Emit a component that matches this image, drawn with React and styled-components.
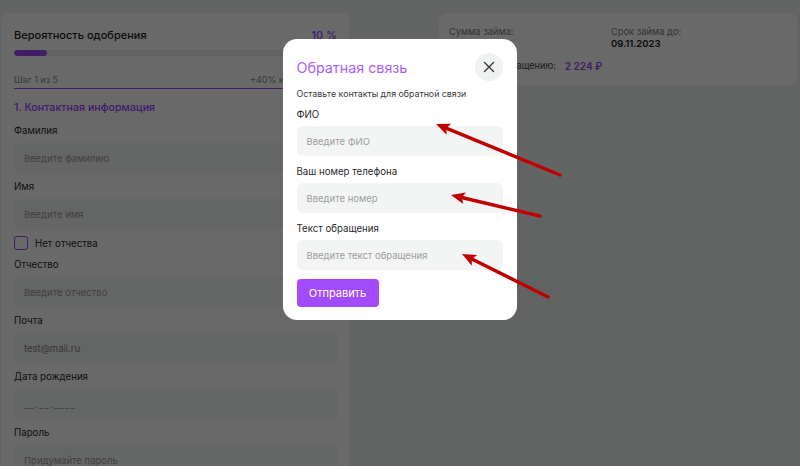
import React from "react";
import styled, { createGlobalStyle } from "styled-components";

const PURPLE = "#9d44fb";

const GlobalStyle = createGlobalStyle`
  html, body { margin: 0; padding: 0; }
  body {
    background: #eef0f0;
    font-family: Inter, "Noto Sans", "Liberation Sans", sans-serif;
    color: #1c1c1c;
    overflow: hidden;
  }
  * { box-sizing: border-box; }
`;

const Page = styled.div`
  display: flex;
  align-items: flex-start;
  padding: 13px 3px 0 1px;
  height: 466px;
  overflow: hidden;
`;

const FormCard = styled.div`
  width: 349px;
  height: 480px;
  background: #fff;
  border-radius: 8px;
  padding: 14px 13px 0 13px;
  display: flex;
  flex-direction: column;
`;

const Row = styled.div`
  display: flex;
  justify-content: space-between;
  align-items: center;
`;

const CardTitle = styled.div`
  font-size: 11px;
  line-height: 16px;
  font-weight: 500;
  color: ${(p) => (p.$accent ? PURPLE : "#1c1c1c")};
`;

const Track = styled.div`
  margin-top: 7px;
  height: 6px;
  border-radius: 3px;
  background: #eceef0;
  overflow: hidden;
`;

const Fill = styled.div`
  height: 100%;
  border-radius: 3px;
  background: ${PURPLE};
`;

const StepRow = styled(Row)`
  margin-top: 17px;
  padding-bottom: 1px;
  border-bottom: 1.5px solid ${PURPLE};
`;

const StepText = styled.span`
  font-size: 9px;
  line-height: 14px;
  color: #8c8c8c;
`;

const SectionTitle = styled.div`
  margin-top: 11px;
  font-size: 10.7px;
  line-height: 16px;
  font-weight: 500;
  color: ${PURPLE};
`;

const Fields = styled.div`
  margin-top: 8px;
  display: flex;
  flex-direction: column;
  gap: 7px;
`;

const Field = styled.div`
  display: flex;
  flex-direction: column;
  gap: ${(p) => p.$gap || 5}px;
`;

const Label = styled.div`
  font-size: 9.7px;
  line-height: 14px;
  color: #2a2a2a;
`;

const Input = styled.div`
  height: 30px;
  border-radius: 6px;
  background: #f3f5f5;
  display: flex;
  align-items: center;
  padding-left: 10px;
  font-size: 9.5px;
  color: ${(p) => (p.$filled ? "#8a8a8a" : "#9e9e9e")};
  letter-spacing: ${(p) => (p.$mask ? "1.2px" : "normal")};
`;

const CheckRow = styled.label`
  display: flex;
  align-items: center;
  gap: 7px;
  height: 14px;
  font-size: 9.7px;
  color: #2a2a2a;
  margin-bottom: 1px;
`;

const CheckBox = styled.span`
  width: 14px;
  height: 14px;
  border: 1.5px solid ${PURPLE};
  border-radius: 3px;
`;

const SideCol = styled.div`
  margin-left: 89px;
  flex: 1;
`;

const LoanCard = styled.div`
  height: 72px;
  background: #fff;
  border-radius: 8px;
  padding: 13px 10px 0 10px;
  display: grid;
  grid-template-columns: 162px 1fr;
  grid-template-rows: 23px auto;
`;

const LoanCell = styled.div`
  display: flex;
  flex-direction: column;
`;

const LoanLabel = styled.span`
  font-size: 9.3px;
  line-height: 12px;
  color: #7d7d7d;
`;

const LoanValue = styled.span`
  font-size: 9.5px;
  line-height: 12px;
  font-weight: 600;
  color: #1c1c1c;
`;

const TotalRow = styled.div`
  grid-column: 1 / 3;
  align-self: start;
  display: flex;
  align-items: center;
  gap: 9px;
  height: 13px;
  margin-top: 10px;
`;

const TotalLabel = styled.span`
  font-size: 9.2px;
  color: #444;
`;

const TotalValue = styled.span`
  font-size: 10px;
  font-weight: 600;
  color: ${PURPLE};
`;

const Overlay = styled.div`
  position: fixed;
  inset: 0;
  background: rgba(0, 0, 0, 0.59);
  display: flex;
  justify-content: center;
  align-items: flex-start;
  padding-top: 39px;
`;

const Modal = styled.div`
  width: 234px;
  margin-right: 1px;
  background: #fff;
  border-radius: 14px;
  padding: 14px 14px 13px 14px;
  display: flex;
  flex-direction: column;
`;

const ModalHead = styled.div`
  display: flex;
  justify-content: space-between;
  align-items: center;
  height: 28px;
`;

const ModalTitle = styled.div`
  font-size: 14.3px;
  color: #ab5ff7;
  font-weight: 400;
`;

const CloseBtn = styled.button`
  width: 28px;
  height: 28px;
  border-radius: 50%;
  border: none;
  background: #f0f2f2;
  display: flex;
  align-items: center;
  justify-content: center;
  padding: 0;
`;

const Subtitle = styled.div`
  margin-top: 7px;
  font-size: 8.8px;
  line-height: 12px;
  color: #3a3a3a;
`;

const ModalFields = styled.div`
  margin-top: 8px;
  display: flex;
  flex-direction: column;
  gap: 9px;
`;

const SubmitBtn = styled.button`
  margin-top: 9px;
  align-self: flex-start;
  width: 82px;
  height: 28px;
  border: none;
  border-radius: 4px;
  background: #a24bfa;
  color: #fff;
  font-family: inherit;
  font-size: 11px;
`;

const Annotations = styled.svg`
  position: fixed;
  inset: 0;
  pointer-events: none;
`;

function Arrow({ x1, y1, x2, y2 }) {
  const dx = x2 - x1;
  const dy = y2 - y1;
  const len = Math.hypot(dx, dy);
  const ux = dx / len;
  const uy = dy / len;
  const px = -uy;
  const py = ux;
  const hl = 14;
  const hw = 6;
  const bx = x2 - ux * hl;
  const by = y2 - uy * hl;
  const nx = x2 - ux * (hl - 3);
  const ny = y2 - uy * (hl - 3);
  const pts = [
    [x2, y2],
    [bx + px * hw, by + py * hw],
    [nx, ny],
    [bx - px * hw, by - py * hw],
  ]
    .map((p) => p.join(","))
    .join(" ");
  return (
    <g>
      <line x1={x1} y1={y1} x2={nx} y2={ny} stroke="#c00000" strokeWidth="3.4" strokeLinecap="round" />
      <polygon points={pts} fill="#c00000" />
    </g>
  );
}

const formFields = [
  { label: "Фамилия", ph: "Введите фамилию" },
  { label: "Имя", ph: "Введите имя" },
  { check: true },
  { label: "Отчество", ph: "Введите отчество" },
  { label: "Почта", ph: "test@mail.ru", filled: true },
  { label: "Дата рождения", ph: "__.__.____", mask: true },
  { label: "Пароль", ph: "Придумайте пароль" },
];

const modalFields = [
  { label: "ФИО", ph: "Введите ФИО" },
  { label: "Ваш номер телефона", ph: "Введите номер" },
  { label: "Текст обращения", ph: "Введите текст обращения" },
];

export default function App() {
  return (
    <>
      <GlobalStyle />
      <Page>
        <FormCard>
          <Row>
            <CardTitle>Вероятность одобрения</CardTitle>
            <CardTitle $accent>10 %</CardTitle>
          </Row>
          <Track>
            <Fill style={{ width: "10.3%" }} />
          </Track>
          <StepRow>
            <StepText>Шаг 1 из 5</StepText>
            <StepText>+40% к одобрению</StepText>
          </StepRow>
          <SectionTitle>1. Контактная информация</SectionTitle>
          <Fields>
            {formFields.map((f, i) =>
              f.check ? (
                <CheckRow key={i}>
                  <CheckBox />
                  Нет отчества
                </CheckRow>
              ) : (
                <Field key={i}>
                  <Label>{f.label}</Label>
                  <Input $filled={f.filled} $mask={f.mask}>{f.ph}</Input>
                </Field>
              )
            )}
          </Fields>
        </FormCard>
        <SideCol>
          <LoanCard>
            <LoanCell>
              <LoanLabel>Сумма займа:</LoanLabel>
            </LoanCell>
            <LoanCell>
              <LoanLabel>Срок займа до:</LoanLabel>
              <LoanValue>09.11.2023</LoanValue>
            </LoanCell>
            <TotalRow>
              <TotalLabel>Сумма к возвращению:</TotalLabel>
              <TotalValue>2 224 ₽</TotalValue>
            </TotalRow>
          </LoanCard>
        </SideCol>
      </Page>
      <Overlay>
        <Modal>
          <ModalHead>
            <ModalTitle>Обратная связь</ModalTitle>
            <CloseBtn aria-label="Закрыть">
              <svg width="12" height="12" viewBox="0 0 12 12">
                <path d="M1.5 1.5 L10.5 10.5 M10.5 1.5 L1.5 10.5" stroke="#333" strokeWidth="1.3" strokeLinecap="round" />
              </svg>
            </CloseBtn>
          </ModalHead>
          <Subtitle>Оставьте контакты для обратной связи</Subtitle>
          <ModalFields>
            {modalFields.map((f) => (
              <Field key={f.label} $gap={4}>
                <Label>{f.label}</Label>
                <Input>{f.ph}</Input>
              </Field>
            ))}
          </ModalFields>
          <SubmitBtn>Отправить</SubmitBtn>
        </Modal>
      </Overlay>
      <Annotations width="800" height="466" viewBox="0 0 800 466">
        <Arrow x1={560} y1={175} x2={436} y2={124} />
        <Arrow x1={540} y1={216} x2={451} y2={195} />
        <Arrow x1={548} y1={297} x2={462} y2={254} />
      </Annotations>
    </>
  );
}
